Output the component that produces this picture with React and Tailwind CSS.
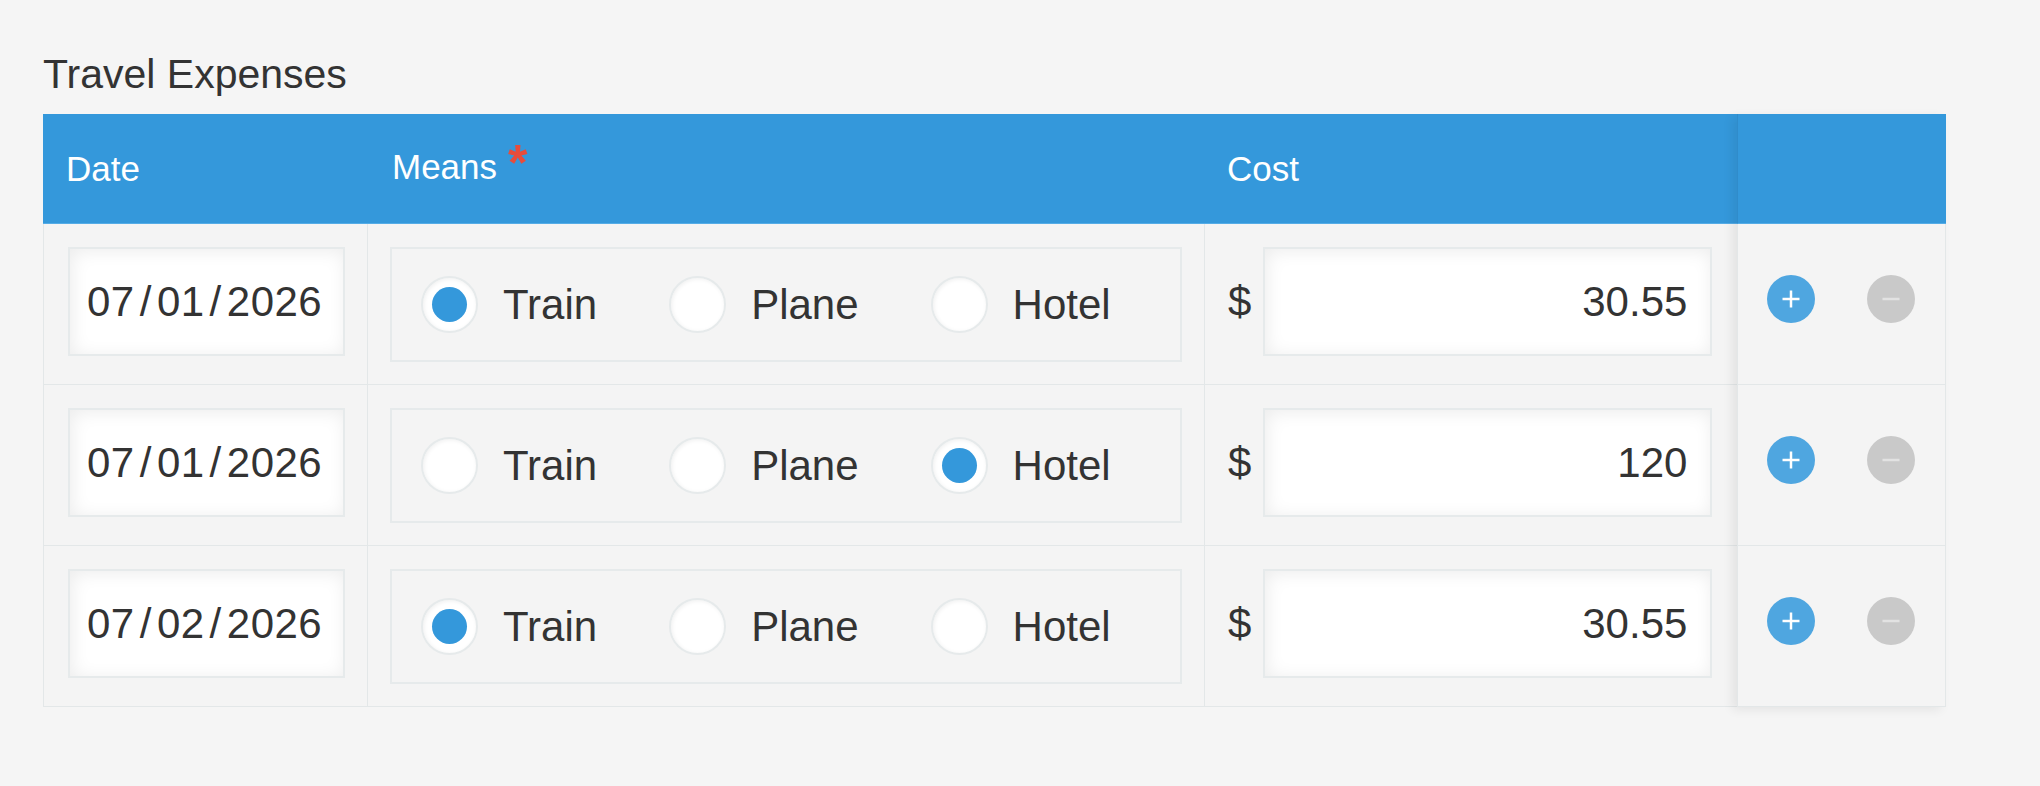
import React from "react";

const rows = [
  { date: ["07", "01", "2026"], means: "Train", cost: "30.55" },
  { date: ["07", "01", "2026"], means: "Hotel", cost: "120" },
  { date: ["07", "02", "2026"], means: "Train", cost: "30.55" },
];

function Radio({ label, checked }) {
  return (
    <div className="flex items-center gap-[25px]">
      <div className="flex h-[57px] w-[57px] items-center justify-center rounded-full border-2 border-[#e6eaeb] bg-white shadow-[inset_1px_1px_4px_#f0f0f0]">
        {checked && <div className="h-[35px] w-[35px] rounded-full bg-[#3498db]" />}
      </div>
      <span className="leading-none">{label}</span>
    </div>
  );
}

function DateText({ parts }) {
  return (
    <span className="tracking-[0.5px] leading-none">
      {parts[0]}
      <span className="mx-[5px]">/</span>
      {parts[1]}
      <span className="mx-[5px]">/</span>
      {parts[2]}
    </span>
  );
}

function PlusButton() {
  return (
    <div className="flex h-[48px] w-[48px] items-center justify-center rounded-full bg-[#4fa6e0]">
      <svg width="20" height="20" viewBox="0 0 20 20">
        <line x1="10" y1="1.5" x2="10" y2="18.5" stroke="white" strokeWidth="2.5" />
        <line x1="1.5" y1="10" x2="18.5" y2="10" stroke="white" strokeWidth="2.5" />
      </svg>
    </div>
  );
}

function MinusButton() {
  return (
    <div className="flex h-[48px] w-[48px] items-center justify-center rounded-full bg-[#c9c9c9]">
      <svg width="20" height="20" viewBox="0 0 20 20">
        <line x1="1.5" y1="10" x2="18.5" y2="10" stroke="#e2e2e2" strokeWidth="2.5" />
      </svg>
    </div>
  );
}

export default function App() {
  return (
    <div
      className="min-h-screen bg-[#f5f5f5] pl-[43px] pt-[54px] text-[#333]"
      style={{ fontFamily: '"Liberation Sans", Arial, sans-serif' }}
    >
      <div className="mb-[19px] text-[41px] leading-[41px] text-[#333]">Travel Expenses</div>

      <div className="flex w-fit">
        {/* main columns */}
        <div className="w-[1694px]">
          <div className="flex h-[110px] items-center border-b border-[#55ace6] bg-[#3498db] text-[35px] leading-none text-white">
            <div className="w-[325px] pl-[23px]">Date</div>
            <div className="flex w-[837px] items-start pl-[24px]">
              <span>Means</span>
              <span className="ml-[11px] -mt-[11px] text-[50px] font-bold leading-none text-[#e74c3c]">*</span>
            </div>
            <div className="w-[532px] pl-[22px]">Cost</div>
          </div>

          {rows.map((r, i) => (
            <div key={i} className="flex h-[161px] border-b border-[#e3e7e8] bg-[#f4f4f4] text-[42px]">
              <div className="w-[325px] border-x border-[#e3e7e8] pl-[24px] pt-[23px]">
                <div className="flex h-[109px] w-[277px] items-center border-2 border-[#e6eaeb] bg-white pl-[17px] shadow-[inset_2px_2px_18px_#ececec]">
                  <DateText parts={r.date} />
                </div>
              </div>
              <div className="w-[837px] border-r border-[#e3e7e8] pl-[22px] pt-[23px]">
                <div className="flex h-[115px] w-[792px] items-center gap-[72px] border-2 border-[#e6eaeb] pl-[29px]">
                  {["Train", "Plane", "Hotel"].map((m) => (
                    <Radio key={m} label={m} checked={r.means === m} />
                  ))}
                </div>
              </div>
              <div className="w-[532px] pl-[23px] pt-[23px]">
                <div className="flex h-[109px] items-center gap-[12px]">
                  <span className="leading-none">$</span>
                  <div className="flex h-[109px] w-[449px] items-center justify-end border-2 border-[#e6eaeb] bg-white pr-[23px] shadow-[inset_2px_2px_18px_#ececec]">
                    <span className="leading-none">{r.cost}</span>
                  </div>
                </div>
              </div>
            </div>
          ))}
        </div>

        {/* actions column */}
        <div className="relative z-10 w-[209px] shadow-[-5px_3px_10px_rgba(0,0,0,0.07)]">
          <div className="h-[110px] border-b border-l border-[#55ace6] border-l-[#2f8ccb] bg-[#3498db]" />
          {rows.map((r, i) => (
            <div
              key={i}
              className="flex h-[161px] items-start gap-[52px] border-x border-b border-[#e3e7e8] bg-[#f4f4f4] pl-[29px] pt-[51px]"
            >
              <PlusButton />
              <MinusButton />
            </div>
          ))}
        </div>
      </div>
    </div>
  );
}
